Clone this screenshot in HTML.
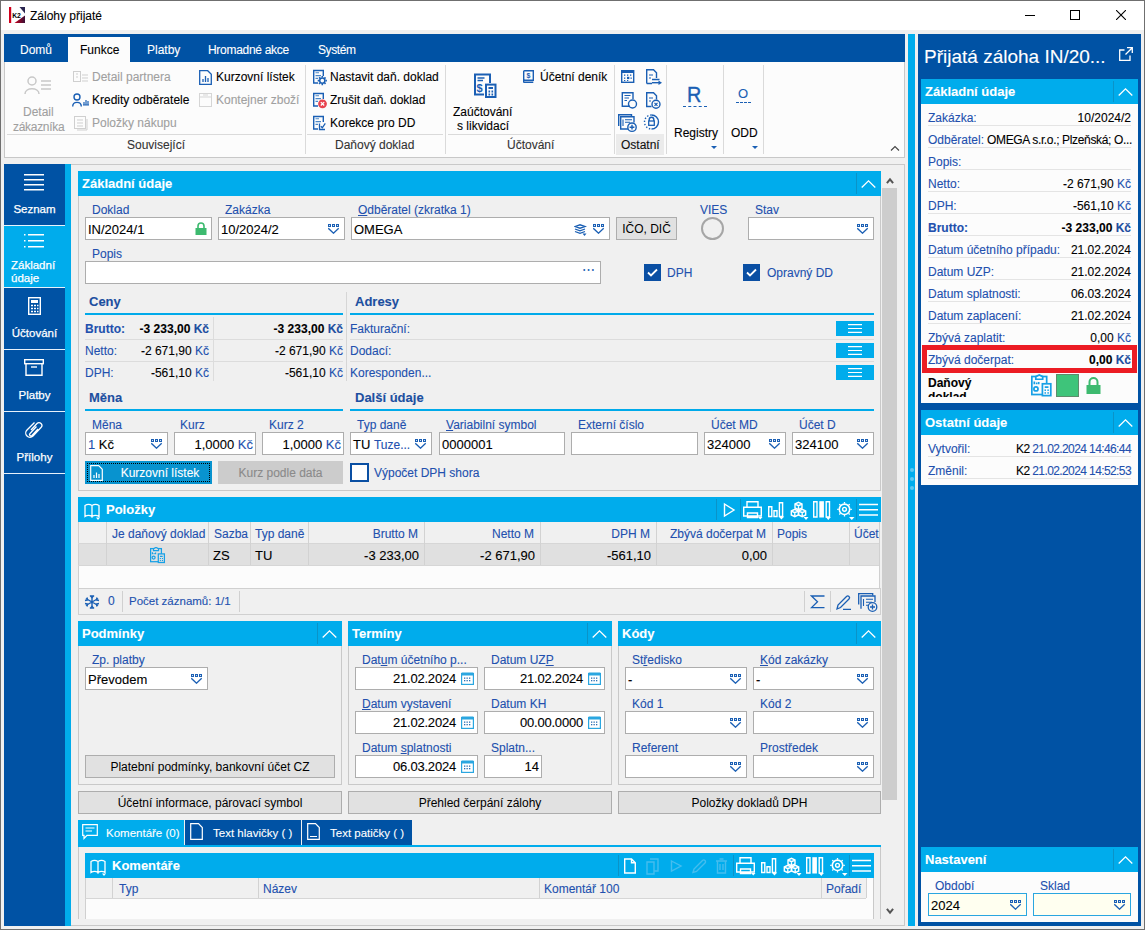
<!DOCTYPE html>
<html><head><meta charset="utf-8">
<style>
*{box-sizing:border-box;margin:0;padding:0}
html,body{width:1145px;height:930px;overflow:hidden}
body{position:relative;background:#f0f0f0;font-family:"Liberation Sans",sans-serif;font-size:12px;color:#000;-webkit-font-smoothing:antialiased}
.t{-webkit-text-stroke:0.1px currentColor}
.a{position:absolute}
.t{position:absolute;white-space:nowrap;line-height:14px}
.db{background:#0052a4}
.cy{background:#00acec}
.lbl{position:absolute;white-space:nowrap;line-height:14px;color:#2355a8}
.inp{position:absolute;background:#fff;border:1px solid #adadad;height:23px}
.inp .v{position:absolute;left:3px;top:4px;line-height:14px;white-space:nowrap}
.hdr{position:absolute;background:#00acec;height:25px;color:#fff;font-weight:bold;font-size:13px}
.hdr .ht{position:absolute;left:4px;top:5px;line-height:15px;white-space:nowrap}
.chev{position:absolute;top:0;width:25px;height:25px;border-left:1px solid #0493c9}
.panel{position:absolute;border:1px solid #d0d0d0;border-top:none;background:#f0f0f0}
.btn{position:absolute;background:#e1e1e1;border:1px solid #adadad;text-align:center;line-height:20px;white-space:nowrap}
.dd{position:absolute;width:13px;height:11px}
.sec{position:absolute;color:#1c4fa0;font-weight:bold;font-size:13px;line-height:15px;white-space:nowrap}
.secl{position:absolute;height:2px;background:#00a2e8}
.rib{color:#000}
.gr{color:#a0a0a0}
</style></head><body>

<!-- title bar -->
<div class="a" style="left:1px;top:1px;width:1143px;height:29px;background:#fff"></div>
<div class="t" style="left:30px;top:9px;font-size:12px">Zálohy přijaté</div>

<!-- ribbon tab bar -->
<div class="a db" style="left:4px;top:34px;width:901px;height:28px"></div>
<!-- ribbon content -->
<div class="a" style="left:4px;top:62px;width:901px;height:96px;background:#fcfcfc;border:1px solid #c8c8c8;border-top:none"></div>


<!-- title icon -->
<svg class="a" style="left:9px;top:7px" width="16" height="16" viewBox="0 0 16 16">
<defs><linearGradient id="k2g" x1="0" y1="0" x2="1" y2="0"><stop offset="0" stop-color="#c8001a"/><stop offset="1" stop-color="#3a1038"/></linearGradient></defs>
<rect x="0" y="0" width="2.2" height="16" fill="#d0001c"/>
<path d="M10.5 0 L16 0 L16 6.5 Z" fill="#2a2550"/>
<path d="M5.5 16 L16 8.5 L16 16 Z" fill="url(#k2g)"/>
<text x="3.2" y="10.8" font-family="Liberation Sans" font-weight="bold" font-size="6.8" fill="#000">K2</text>
</svg>
<!-- window controls -->
<div class="a" style="left:1025px;top:15px;width:10px;height:1px;background:#000"></div>
<div class="a" style="left:1070px;top:10px;width:10px;height:10px;border:1px solid #000"></div>
<svg class="a" style="left:1116px;top:10px" width="10" height="10" viewBox="0 0 10 10"><path d="M0 0L10 10M10 0L0 10" stroke="#000" stroke-width="1.1"/></svg>

<!-- ribbon tabs -->
<div class="a" style="left:68px;top:37px;width:62px;height:25px;background:#fcfcfc"></div>
<div class="t" style="left:20px;top:43px;color:#fff">Domů</div>
<div class="t" style="left:80px;top:43px;color:#000">Funkce</div>
<div class="t" style="left:147px;top:43px;color:#fff">Platby</div>
<div class="t" style="left:208px;top:43px;color:#fff;letter-spacing:-0.3px">Hromadné akce</div>
<div class="t" style="left:318px;top:43px;color:#fff;letter-spacing:-0.4px">Systém</div>

<!-- ribbon separators -->
<div class="a" style="left:305px;top:65px;width:1px;height:89px;background:#dadada"></div>
<div class="a" style="left:445px;top:65px;width:1px;height:89px;background:#dadada"></div>
<div class="a" style="left:614px;top:65px;width:1px;height:89px;background:#dadada"></div>
<div class="a" style="left:666px;top:65px;width:1px;height:89px;background:#dadada"></div>
<div class="a" style="left:723px;top:65px;width:1px;height:89px;background:#dadada"></div>
<div class="a" style="left:763px;top:65px;width:1px;height:89px;background:#dadada"></div>
<div class="a" style="left:7px;top:134px;width:295px;height:1px;background:#dadada"></div>
<div class="a" style="left:307px;top:134px;width:136px;height:1px;background:#dadada"></div>
<div class="a" style="left:448px;top:134px;width:163px;height:1px;background:#dadada"></div>
<div class="a" style="left:616px;top:134px;width:48px;height:21px;background:#ebebeb"></div>

<!-- group Související -->
<svg class="a" style="left:24px;top:76px" width="28" height="18" viewBox="0 0 28 18"><g fill="none" stroke="#c8c8c8" stroke-width="1.5"><circle cx="8" cy="5" r="4"/><path d="M1 18 C1 11 15 11 15 18"/><path d="M17 5H27M17 9H27M17 13H27"/></g></svg>
<div class="t gr" style="left:23px;top:105px">Detail</div>
<div class="t gr" style="left:13px;top:120px;letter-spacing:-0.3px">zákazníka</div>

<svg class="a" style="left:73px;top:70px" width="16" height="14" viewBox="0 0 16 14"><g fill="none" stroke="#cfcfcf" stroke-width="1"><rect x="0.5" y="1.5" width="7" height="10"/><path d="M3 4h2M3 7h2M9 5h6M9 8h6M9 11h6"/></g></svg>
<div class="t gr" style="left:92px;top:70px">Detail partnera</div>
<svg class="a" style="left:72px;top:93px" width="18" height="14" viewBox="0 0 18 14"><g fill="none" stroke="#1a5fb4" stroke-width="1.4"><circle cx="5" cy="4" r="3"/><path d="M0.7 13.5C0.7 8 9.3 8 9.3 13.5"/></g><path d="M11 12h6M12 12V9M14 12V7M16 12V8" stroke="#1a5fb4" stroke-width="1.2"/></svg>
<div class="t" style="left:92px;top:93px">Kredity odběratele</div>
<svg class="a" style="left:74px;top:116px" width="14" height="15" viewBox="0 0 14 15"><g fill="none" stroke="#cfcfcf" stroke-width="1"><rect x="0.5" y="0.5" width="11" height="12"/><path d="M3 4h6M3 7h6M3 10h6M13 3v11H3"/></g></svg>
<div class="t gr" style="left:92px;top:116px">Položky nákupu</div>

<svg class="a" style="left:199px;top:70px" width="13" height="15" viewBox="0 0 13 15"><g fill="none" stroke="#1a5fb4" stroke-width="1.3"><path d="M0.7 0.7h8l3.6 3.6v10H0.7z"/></g><path d="M4 12V9M6.5 12V6M9 12V8" stroke="#1a5fb4" stroke-width="1.3"/></svg>
<div class="t" style="left:216px;top:70px">Kurzovní lístek</div>
<svg class="a" style="left:199px;top:93px" width="13" height="14" viewBox="0 0 13 14"><g fill="none" stroke="#d5d5d5" stroke-width="1"><rect x="0.5" y="0.5" width="12" height="13"/><path d="M0.5 4h12M4 2h5"/></g></svg>
<div class="t gr" style="left:216px;top:93px">Kontejner zboží</div>
<div class="t" style="left:127px;top:138px;color:#333">Související</div>

<!-- group Daňový doklad -->
<svg class="a" style="left:305px;top:65px" width="30" height="70" viewBox="305 65 30 70"><path d="M318 83H313.7V70.5H323.3V76" fill="none" stroke="#1a5fb4" stroke-width="1.4"/><path d="M315.5 72.8H319M315.5 75.6H321M315.5 78.4H318" stroke="#4a86c8" stroke-width="1.1"/><circle cx="322.3" cy="80.6" r="2.6" fill="none" stroke="#1a5fb4" stroke-width="1.5"/><path d="M325.50 80.60L326.90 80.60M324.56 82.86L325.55 83.85M322.30 83.80L322.30 85.20M320.04 82.86L319.05 83.85M319.10 80.60L317.70 80.60M320.04 78.34L319.05 77.35M322.30 77.40L322.30 76.00M324.56 78.34L325.55 77.35" stroke="#1a5fb4" stroke-width="1.6"/><path d="M318 106H313.7V93.5H323.3V99" fill="none" stroke="#1a5fb4" stroke-width="1.4"/><path d="M315.5 95.8H319M315.5 98.6H321M315.5 101.4H318" stroke="#4a86c8" stroke-width="1.1"/><circle cx="322.5" cy="103.8" r="4.4" fill="#e8434f"/><path d="M320.8 102.1l3.4 3.4M324.2 102.1l-3.4 3.4" stroke="#fff" stroke-width="1.3"/><path d="M318 129H313.7V116.5H323.3V122" fill="none" stroke="#1a5fb4" stroke-width="1.4"/><path d="M315.5 118.8H319M315.5 121.6H321M315.5 124.4H318" stroke="#4a86c8" stroke-width="1.1"/><path d="M319.5 123.5V129.5H325" fill="none" stroke="#1a5fb4" stroke-width="1.3"/><path d="M320.8 126.3L322.3 127.8L325.3 123.3" fill="none" stroke="#1a5fb4" stroke-width="1.3"/></svg>
<div class="t" style="left:330px;top:70px">Nastavit daň. doklad</div>

<div class="t" style="left:330px;top:93px">Zrušit daň. doklad</div>

<div class="t" style="left:330px;top:116px">Korekce pro DD</div>
<div class="t" style="left:335px;top:138px;color:#333">Daňový doklad</div>

<!-- group Účtování -->
<svg class="a" style="left:473px;top:73px" width="24" height="25" viewBox="0 0 24 25"><g fill="none" stroke="#1a5fb4" stroke-width="2"><path d="M11 21.6H2V1.6H17V10"/><rect x="13" y="11.6" width="9.5" height="12.4"/></g><path d="M4.5 5H11.5M4.5 7.5H10" stroke="#1a5fb4" stroke-width="1.6"/><text x="3.6" y="18.5" font-family="Liberation Sans" font-weight="bold" font-size="11" fill="#1a5fb4">$</text><path d="M15.5 15H20M15.5 18.5h1.6M18.5 18.5h1.6M15.5 21.5h1.6M18.5 21.5h1.6" stroke="#1a5fb4" stroke-width="1.8"/></svg>
<div class="t" style="left:453px;top:105px">Zaúčtování</div>
<div class="t" style="left:457px;top:119px">s likvidací</div>
<svg class="a" style="left:523px;top:70px" width="11" height="13" viewBox="0 0 11 13"><g fill="none" stroke="#1a5fb4" stroke-width="1.4"><path d="M0.7 11V1.5A0.8 0.8 0 0 1 1.5 0.7H10.3V10.3H1.5A0.8 0.8 0 0 0 0.7 11A0.8 0.8 0 0 0 1.5 12.3H10.3"/></g><text x="3.6" y="7.8" font-family="Liberation Sans" font-weight="bold" font-size="7" fill="#1a5fb4">$</text></svg>
<div class="t" style="left:540px;top:70px">Účetní deník</div>
<div class="t" style="left:507px;top:138px;color:#333">Účtování</div>

<!-- group Ostatní -->
<svg class="a" style="left:614px;top:64px" width="54" height="70" viewBox="614 64 54 70"><g fill="none" stroke="#1a5fb4" stroke-width="1.4">
<rect x="621.7" y="70.7" width="12" height="11.6"/>
<path d="M646.7 83.5V69.7H653.5L656.5 72.7V78M652 83.5H646.7M652 79.5H656.5A2 2 0 0 1 656.5 79.5H659.5"/>
<path d="M649 75H653M649 78H651" stroke-width="1.2"/>
<path d="M630 106.3H622.3V92.7H633V99"/><circle cx="632.5" cy="104" r="4"/>
<path d="M624.5 95.5H630.5M624.5 98H629M624.5 100.5H627" stroke-width="1.1"/>
<path d="M651.5 106.5H646.7V92.7H653.5L656.5 95.7V99.5"/><circle cx="656" cy="104.3" r="4"/>
<path d="M654.5 102.8L657.5 105.8M657.5 102.8L654.5 105.8" stroke-width="1.2"/>
<path d="M649 98H653M649 101H651" stroke-width="1.2"/>
<path d="M618.7 126V114.7H631.5V116.5"/><path d="M628 129H620.7V116.7H634V122.5"/>
<path d="M623 119.5V126M625 119.7H632M625 122.3H630" stroke-width="1.1"/>
<path d="M651.5 115A7 7 0 0 1 651.5 129"/>
<path d="M651.5 115A7 7 0 0 0 651.5 129" stroke-dasharray="1.4 1.8"/>
<path d="M649.2 121V119.5A2.3 2.3 0 0 1 653.8 119.5V121"/>
</g>
<rect x="621.7" y="70.7" width="12" height="2.3" fill="#1a5fb4"/>
<g fill="#1a5fb4"><rect x="624" y="74.5" width="1.3" height="1.3"/><rect x="627" y="74.5" width="1.3" height="1.3"/><rect x="630" y="74.5" width="1.3" height="1.3"/><rect x="624" y="77.5" width="1.3" height="1.3"/><rect x="627" y="76.8" width="2.3" height="2.3"/><rect x="630.5" y="77.5" width="1.3" height="1.3"/><rect x="624" y="80" width="1.3" height="1"/><rect x="627" y="80" width="1.3" height="1"/></g>
<path d="M658.5 80.5L662 82.7L658.5 85Z" fill="#1a5fb4"/>
<path d="M652 82.7H659" stroke="#1a5fb4" stroke-width="1.4"/>
<circle cx="632" cy="127.2" r="4.2" fill="#fcfcfc" stroke="#1a5fb4" stroke-width="1.4"/><path d="M629.6 127.2H634.4M632 124.8V129.6" stroke="#1a5fb4" stroke-width="1.4"/>
<rect x="648.7" y="121" width="5.6" height="4.3" fill="none" stroke="#1a5fb4" stroke-width="1.3"/>
</svg>
<div class="t" style="left:621px;top:138px;color:#111">Ostatní</div>

<!-- Registry -->
<div class="t" style="left:687px;top:84px;font-size:22px;line-height:22px;color:#1a5fb4;transform:scaleX(0.9);transform-origin:0 0;-webkit-text-stroke:0.4px #1a5fb4">R</div>
<div class="a" style="left:683px;top:106px;width:24px;height:0;border-top:1.5px dashed #1a5fb4"></div>
<div class="t" style="left:674px;top:126px">Registry</div>
<div class="a" style="left:711px;top:146px;width:0;height:0;border-left:3.5px solid transparent;border-right:3.5px solid transparent;border-top:3px solid #1a5fb4"></div>

<!-- ODD -->
<div class="t" style="left:738px;top:87px;font-size:13px;line-height:14px;color:#1a5fb4">O</div>
<div class="a" style="left:736px;top:102px;width:15px;height:0;border-top:1.2px dashed #1a5fb4"></div>
<div class="t" style="left:731px;top:126px">ODD</div>
<div class="a" style="left:752px;top:146px;width:0;height:0;border-left:3.5px solid transparent;border-right:3.5px solid transparent;border-top:3px solid #1a5fb4"></div>

<svg class="a" style="left:890px;top:145px" width="10" height="6" viewBox="0 0 10 6"><path d="M1 5.5L5 1.5L9 5.5" fill="none" stroke="#444" stroke-width="1.1"/></svg>

<div class="a" style="left:4px;top:164px;width:61px;height:762px;background:#0052a4"></div>
<div class="a" style="left:65px;top:164px;width:6px;height:762px;background:#00acec"></div>
<div class="a" style="left:4px;top:226px;width:61px;height:61px;background:#00acec"></div>
<div class="a" style="left:4px;top:225px;width:61px;height:1px;background:#e8f2fb"></div>
<div class="a" style="left:4px;top:287px;width:61px;height:1px;background:#e8f2fb"></div>
<div class="a" style="left:4px;top:349px;width:61px;height:1px;background:#e8f2fb"></div>
<div class="a" style="left:4px;top:411px;width:61px;height:1px;background:#e8f2fb"></div>
<div class="a" style="left:4px;top:473px;width:61px;height:1px;background:#e8f2fb"></div>
<svg class="a" style="left:24px;top:174px" width="20" height="17" viewBox="0 0 20 17"><path d="M0 0.75H20M0 5.75H20M0 10.75H20M0 15.75H20" stroke="#fff" stroke-width="1.3"/></svg>
<div class="t" style="left:4px;top:202px;width:61px;text-align:center;color:#fff;font-size:11.5px;-webkit-text-stroke:0.25px #fff">Seznam</div>
<svg class="a" style="left:24px;top:234px" width="20" height="14" viewBox="0 0 20 14"><path d="M4 0.75H20M4 6.75H20M4 12.75H20" stroke="#fff" stroke-width="1.3"/><path d="M0 0.75H1.5M0 6.75H1.5M0 12.75H1.5" stroke="#fff" stroke-width="1.3"/></svg>
<div class="t" style="left:11px;top:258px;color:#fff;font-size:11.5px;-webkit-text-stroke:0.25px #fff">Základní</div>
<div class="t" style="left:11px;top:271px;color:#fff;font-size:11.5px;-webkit-text-stroke:0.25px #fff">údaje</div>
<svg class="a" style="left:28px;top:297px" width="13" height="18" viewBox="0 0 13 18"><rect x="0.7" y="0.7" width="11.6" height="16.6" fill="none" stroke="#fff" stroke-width="1.4"/><rect x="3" y="3" width="7" height="3" fill="#fff"/><path d="M3 8.5h2M6 8.5h2M9 8.5h1.5M3 11.5h2M6 11.5h2M9 11.5h1.5M3 14.5h2M6 14.5h2M9 14.5h1.5" stroke="#fff" stroke-width="1.5"/></svg>
<div class="t" style="left:4px;top:326px;width:61px;text-align:center;color:#fff;font-size:11.5px;-webkit-text-stroke:0.25px #fff">Účtování</div>
<svg class="a" style="left:24px;top:359px" width="20" height="17" viewBox="0 0 20 17"><rect x="0.7" y="0.7" width="18.6" height="4" fill="none" stroke="#fff" stroke-width="1.4"/><path d="M2 4.7V16.3H18V4.7" fill="none" stroke="#fff" stroke-width="1.4"/><path d="M7 8h6" stroke="#fff" stroke-width="1.4"/></svg>
<div class="t" style="left:4px;top:388px;width:61px;text-align:center;color:#fff;font-size:11.5px;-webkit-text-stroke:0.25px #fff">Platby</div>
<svg class="a" style="left:25px;top:420px" width="18" height="19" viewBox="0 0 18 19"><path d="M6 10L12 3.5a2.8 2.8 0 0 1 4 4L8 16a4.2 4.2 0 0 1-6-6L9.5 2.5M11.5 6.5L5 13.5a1.3 1.3 0 0 0 2 2L13 9" fill="none" stroke="#fff" stroke-width="1.3"/></svg>
<div class="t" style="left:4px;top:450px;width:61px;text-align:center;color:#fff;font-size:11.5px;-webkit-text-stroke:0.25px #fff">Přílohy</div>
<div class="a" style="left:71px;top:164px;width:834px;height:762px;background:#f0f0f0;border-top:1px solid #c9c9c9;border-right:1px solid #c9c9c9"></div>
<svg class="a" style="left:886px;top:177px" width="8" height="7" viewBox="0 0 8 7"><path d="M0.9 6.1L4 2.4L7.1 6.1" fill="none" stroke="#555" stroke-width="2"/></svg>
<div class="a" style="left:882px;top:188px;width:15px;height:612px;background:#cdcdcd"></div>
<svg class="a" style="left:886px;top:908px" width="8" height="7" viewBox="0 0 8 7"><path d="M0.9 0.9L4 4.6L7.1 0.9" fill="none" stroke="#555" stroke-width="2"/></svg>
<div class="a" style="left:78px;top:171px;width:803px;height:25px;background:#00acec"></div>
<div class="t" style="left:82px;top:176px;color:#fff;font-weight:bold;font-size:13px;line-height:15px">Základní údaje</div>
<div class="a" style="left:856px;top:173px;width:1px;height:21px;background:#0a93c8"></div>
<svg class="a" style="left:861px;top:180px" width="15" height="8" viewBox="0 0 15 8"><path d="M0.7 7.5L7.5 0.9L14.3 7.5" fill="none" stroke="#fff" stroke-width="1.3"/></svg>
<div class="a" style="left:78px;top:196px;width:803px;height:295px;border:1px solid #c9c9c9;border-top:none"></div>
<div class="t" style="left:92px;top:203px;color:#2250ae;">Doklad</div>
<div class="a" style="left:85px;top:217px;width:127px;height:23px;background:#fff;border:1px solid #adadad"></div>
<div class="t" style="left:88px;top:223px;color:#000;font-size:13px">IN/2024/1</div>
<svg class="a" style="left:195px;top:222px" width="12" height="13" viewBox="0 0 12 13"><path d="M3 6V4a3 3 0 0 1 6 0v2" fill="none" stroke="#3dba6f" stroke-width="1.6"/><rect x="0.5" y="6" width="11" height="7" fill="#3dba6f"/></svg>
<div class="t" style="left:225px;top:203px;color:#2250ae;">Zakázka</div>
<div class="a" style="left:218px;top:217px;width:127px;height:23px;background:#fff;border:1px solid #adadad"></div>
<div class="t" style="left:221px;top:223px;color:#000;font-size:13px">10/2024/2</div>
<svg class="a" style="left:328px;top:224px" width="12" height="10" viewBox="0 0 12 10"><g fill="#1a5fb4"><rect x="0" y="0" width="3" height="3"/><rect x="4" y="0" width="3" height="3"/><rect x="8" y="0" width="3" height="3"/></g><g fill="#cfe0f4"><rect x="1" y="1" width="1" height="1"/><rect x="5" y="1" width="1" height="1"/><rect x="9" y="1" width="1" height="1"/></g><path d="M0.3 4.3L5.5 9.2L10.7 4.3" fill="none" stroke="#1a5fb4" stroke-width="1.3"/></svg>
<div class="t" style="left:358px;top:203px;color:#2250ae;"><u>O</u>dběratel (zkratka 1)</div>
<div class="a" style="left:351px;top:217px;width:259px;height:23px;background:#fff;border:1px solid #adadad"></div>
<div class="t" style="left:354px;top:223px;color:#000;font-size:13px">OMEGA</div>
<svg class="a" style="left:593px;top:224px" width="12" height="10" viewBox="0 0 12 10"><g fill="#1a5fb4"><rect x="0" y="0" width="3" height="3"/><rect x="4" y="0" width="3" height="3"/><rect x="8" y="0" width="3" height="3"/></g><g fill="#cfe0f4"><rect x="1" y="1" width="1" height="1"/><rect x="5" y="1" width="1" height="1"/><rect x="9" y="1" width="1" height="1"/></g><path d="M0.3 4.3L5.5 9.2L10.7 4.3" fill="none" stroke="#1a5fb4" stroke-width="1.3"/></svg>
<svg class="a" style="left:574px;top:224px" width="13" height="12" viewBox="0 0 13 12"><g fill="none" stroke="#1a5fb4" stroke-width="1.3"><path d="M1 2.5L6 0.8L11 2.5L6 4.2Z"/><path d="M1 5L6 6.8L11 5M1 7.5L6 9.3L11 7.5"/></g><path d="M8.5 9.5h4l-2 2.5z" fill="#1a5fb4"/></svg>
<div class="a" style="left:616px;top:217px;width:61px;height:23px;background:#e1e1e1;border:1px solid #adadad;text-align:center;line-height:21px;padding-top:1px;white-space:nowrap;">IČO, DIČ</div>
<div class="t" style="left:700px;top:203px;color:#2250ae;">VIES</div>
<div class="a" style="left:701px;top:217px;width:23px;height:23px;border:2px solid #a6a6a6;border-radius:50%"></div>
<div class="t" style="left:755px;top:203px;color:#2250ae;">Stav</div>
<div class="a" style="left:748px;top:217px;width:126px;height:23px;background:#fff;border:1px solid #adadad"></div>
<svg class="a" style="left:857px;top:224px" width="12" height="10" viewBox="0 0 12 10"><g fill="#1a5fb4"><rect x="0" y="0" width="3" height="3"/><rect x="4" y="0" width="3" height="3"/><rect x="8" y="0" width="3" height="3"/></g><g fill="#cfe0f4"><rect x="1" y="1" width="1" height="1"/><rect x="5" y="1" width="1" height="1"/><rect x="9" y="1" width="1" height="1"/></g><path d="M0.3 4.3L5.5 9.2L10.7 4.3" fill="none" stroke="#1a5fb4" stroke-width="1.3"/></svg>
<div class="t" style="left:92px;top:247px;color:#2250ae;">Popis</div>
<div class="a" style="left:85px;top:261px;width:516px;height:23px;background:#fff;border:1px solid #adadad"></div>
<div class="t" style="left:582px;top:263px;color:#1a5fb4;font-size:13px">⋯</div>
<svg class="a" style="left:644px;top:264px" width="17" height="17" viewBox="0 0 17 17"><rect width="17" height="17" fill="#0a4fa3"/><path d="M4 8.5L7 11.5L13 5.5" fill="none" stroke="#fff" stroke-width="1.8"/></svg>
<div class="t" style="left:667px;top:266px;color:#2250ae;">DPH</div>
<svg class="a" style="left:743px;top:264px" width="17" height="17" viewBox="0 0 17 17"><rect width="17" height="17" fill="#0a4fa3"/><path d="M4 8.5L7 11.5L13 5.5" fill="none" stroke="#fff" stroke-width="1.8"/></svg>
<div class="t" style="left:767px;top:266px;color:#2250ae;">Opravný DD</div>
<div class="t" style="left:89px;top:294px;color:#1c4fa0;font-weight:bold;font-size:13px;line-height:15px">Ceny</div>
<div class="a" style="left:85px;top:313px;width:258px;height:2px;background:#00aaea"></div>
<div class="a" style="left:346px;top:292px;width:1px;height:89px;background:#d6d6d6"></div>
<div class="t" style="left:85px;top:322px;color:#2250ae;font-weight:bold;">Brutto:</div>
<div class="t" style="left:120px;top:322px;width:89px;text-align:right;font-weight:bold;">-3 233,00 <span style="color:#1c4fa0">Kč</span></div>
<div class="t" style="left:216px;top:322px;width:127px;text-align:right;font-weight:bold;">-3 233,00 <span style="color:#1c4fa0">Kč</span></div>
<div class="a" style="left:85px;top:339px;width:258px;height:1px;background:#dcdcdc"></div>
<div class="t" style="left:85px;top:344px;color:#2250ae;">Netto:</div>
<div class="t" style="left:120px;top:344px;width:89px;text-align:right;">-2 671,90 <span style="color:#2250ae">Kč</span></div>
<div class="t" style="left:216px;top:344px;width:127px;text-align:right;">-2 671,90 <span style="color:#2250ae">Kč</span></div>
<div class="a" style="left:85px;top:361px;width:258px;height:1px;background:#dcdcdc"></div>
<div class="t" style="left:85px;top:366px;color:#2250ae;">DPH:</div>
<div class="t" style="left:120px;top:366px;width:89px;text-align:right;">-561,10 <span style="color:#2250ae">Kč</span></div>
<div class="t" style="left:216px;top:366px;width:127px;text-align:right;">-561,10 <span style="color:#2250ae">Kč</span></div>
<div class="a" style="left:213px;top:317px;width:1px;height:64px;background:#dcdcdc"></div>
<div class="t" style="left:355px;top:294px;color:#1c4fa0;font-weight:bold;font-size:13px;line-height:15px">Adresy</div>
<div class="a" style="left:350px;top:313px;width:524px;height:2px;background:#00aaea"></div>
<div class="t" style="left:350px;top:322px;color:#2250ae">Fakturační:</div>
<div class="a" style="left:836px;top:321px;width:38px;height:15px;background:#00acec"></div>
<svg class="a" style="left:848px;top:324px" width="14" height="9" viewBox="0 0 14 9"><path d="M0 0.6H14M0 4.5H14M0 8.4H14" stroke="#fff" stroke-width="1.1"/></svg>
<div class="a" style="left:350px;top:339px;width:524px;height:1px;background:#dcdcdc"></div>
<div class="t" style="left:350px;top:344px;color:#2250ae">Dodací:</div>
<div class="a" style="left:836px;top:343px;width:38px;height:15px;background:#00acec"></div>
<svg class="a" style="left:848px;top:346px" width="14" height="9" viewBox="0 0 14 9"><path d="M0 0.6H14M0 4.5H14M0 8.4H14" stroke="#fff" stroke-width="1.1"/></svg>
<div class="a" style="left:350px;top:361px;width:524px;height:1px;background:#dcdcdc"></div>
<div class="t" style="left:350px;top:366px;color:#2250ae">Koresponden...</div>
<div class="a" style="left:836px;top:365px;width:38px;height:15px;background:#00acec"></div>
<svg class="a" style="left:848px;top:368px" width="14" height="9" viewBox="0 0 14 9"><path d="M0 0.6H14M0 4.5H14M0 8.4H14" stroke="#fff" stroke-width="1.1"/></svg>
<div class="t" style="left:89px;top:390px;color:#1c4fa0;font-weight:bold;font-size:13px;line-height:15px">Měna</div>
<div class="a" style="left:85px;top:409px;width:258px;height:2px;background:#00aaea"></div>
<div class="t" style="left:92px;top:418px;color:#2250ae;">Měna</div>
<div class="t" style="left:180px;top:418px;color:#2250ae;">Kurz</div>
<div class="t" style="left:269px;top:418px;color:#2250ae;">Kurz 2</div>
<div class="a" style="left:85px;top:432px;width:83px;height:23px;background:#fff;border:1px solid #adadad"></div>
<div class="t" style="left:88px;top:438px;color:#000;font-size:13px"><span style="color:#2250ae">1</span> Kč</div>
<svg class="a" style="left:151px;top:439px" width="12" height="10" viewBox="0 0 12 10"><g fill="#1a5fb4"><rect x="0" y="0" width="3" height="3"/><rect x="4" y="0" width="3" height="3"/><rect x="8" y="0" width="3" height="3"/></g><g fill="#cfe0f4"><rect x="1" y="1" width="1" height="1"/><rect x="5" y="1" width="1" height="1"/><rect x="9" y="1" width="1" height="1"/></g><path d="M0.3 4.3L5.5 9.2L10.7 4.3" fill="none" stroke="#1a5fb4" stroke-width="1.3"/></svg>
<div class="a" style="left:174px;top:432px;width:82px;height:23px;background:#fff;border:1px solid #adadad"></div>
<div class="t" style="left:174px;top:438px;width:79px;text-align:right;color:#000;font-size:13px">1,0000 <span style="color:#2250ae">Kč</span></div>
<div class="a" style="left:262px;top:432px;width:82px;height:23px;background:#fff;border:1px solid #adadad"></div>
<div class="t" style="left:262px;top:438px;width:79px;text-align:right;color:#000;font-size:13px">1,0000 <span style="color:#2250ae">Kč</span></div>
<div class="a" style="left:85px;top:461px;width:127px;height:23px;background:#0893cf"></div>
<div class="a" style="left:87px;top:463px;width:123px;height:19px;border:1px dotted #000"></div>
<svg class="a" style="left:90px;top:465px" width="13" height="16" viewBox="0 0 13 16"><path d="M0.7 0.7h8l3.6 3.6v11H0.7z" fill="none" stroke="#fff" stroke-width="1.2"/><path d="M4 13V10M6.5 13V7.5M9 13V9" stroke="#fff" stroke-width="1.2"/></svg>
<div class="t" style="left:106px;top:466px;width:108px;text-align:center;color:#fff">Kurzovní lístek</div>
<div class="a" style="left:218px;top:461px;width:125px;height:23px;background:#cccccc"></div>
<div class="t" style="left:218px;top:466px;width:125px;text-align:center;color:#8a8a8a">Kurz podle data</div>
<div class="t" style="left:355px;top:390px;color:#1c4fa0;font-weight:bold;font-size:13px;line-height:15px">Další údaje</div>
<div class="a" style="left:350px;top:409px;width:524px;height:2px;background:#00aaea"></div>
<div class="t" style="left:357px;top:418px;color:#2250ae;">Typ daně</div>
<div class="t" style="left:446px;top:418px;color:#2250ae;"><u>V</u>ariabilní symbol</div>
<div class="t" style="left:578px;top:418px;color:#2250ae;">Externí číslo</div>
<div class="t" style="left:711px;top:418px;color:#2250ae;">Účet MD</div>
<div class="t" style="left:799px;top:418px;color:#2250ae;">Účet D</div>
<div class="a" style="left:350px;top:432px;width:82px;height:23px;background:#fff;border:1px solid #adadad"></div>
<div class="t" style="left:353px;top:438px;color:#000;font-size:13px">TU <span style="color:#2250ae;font-size:12px">Tuze...</span></div>
<svg class="a" style="left:415px;top:439px" width="12" height="10" viewBox="0 0 12 10"><g fill="#1a5fb4"><rect x="0" y="0" width="3" height="3"/><rect x="4" y="0" width="3" height="3"/><rect x="8" y="0" width="3" height="3"/></g><g fill="#cfe0f4"><rect x="1" y="1" width="1" height="1"/><rect x="5" y="1" width="1" height="1"/><rect x="9" y="1" width="1" height="1"/></g><path d="M0.3 4.3L5.5 9.2L10.7 4.3" fill="none" stroke="#1a5fb4" stroke-width="1.3"/></svg>
<div class="a" style="left:439px;top:432px;width:126px;height:23px;background:#fff;border:1px solid #adadad"></div>
<div class="t" style="left:442px;top:438px;color:#000;font-size:13px">0000001</div>
<div class="a" style="left:571px;top:432px;width:127px;height:23px;background:#fff;border:1px solid #adadad"></div>
<div class="a" style="left:704px;top:432px;width:82px;height:23px;background:#fff;border:1px solid #adadad"></div>
<div class="t" style="left:707px;top:438px;color:#000;font-size:13px">324000</div>
<svg class="a" style="left:769px;top:439px" width="12" height="10" viewBox="0 0 12 10"><g fill="#1a5fb4"><rect x="0" y="0" width="3" height="3"/><rect x="4" y="0" width="3" height="3"/><rect x="8" y="0" width="3" height="3"/></g><g fill="#cfe0f4"><rect x="1" y="1" width="1" height="1"/><rect x="5" y="1" width="1" height="1"/><rect x="9" y="1" width="1" height="1"/></g><path d="M0.3 4.3L5.5 9.2L10.7 4.3" fill="none" stroke="#1a5fb4" stroke-width="1.3"/></svg>
<div class="a" style="left:792px;top:432px;width:82px;height:23px;background:#fff;border:1px solid #adadad"></div>
<div class="t" style="left:795px;top:438px;color:#000;font-size:13px">324100</div>
<svg class="a" style="left:857px;top:439px" width="12" height="10" viewBox="0 0 12 10"><g fill="#1a5fb4"><rect x="0" y="0" width="3" height="3"/><rect x="4" y="0" width="3" height="3"/><rect x="8" y="0" width="3" height="3"/></g><g fill="#cfe0f4"><rect x="1" y="1" width="1" height="1"/><rect x="5" y="1" width="1" height="1"/><rect x="9" y="1" width="1" height="1"/></g><path d="M0.3 4.3L5.5 9.2L10.7 4.3" fill="none" stroke="#1a5fb4" stroke-width="1.3"/></svg>
<div class="a" style="left:350px;top:463px;width:19px;height:19px;border:2px solid #0a4fa3;background:#fff"></div>
<div class="t" style="left:374px;top:466px;color:#2250ae;">Výpočet DPH shora</div>
<div class="a" style="left:78px;top:497px;width:803px;height:25px;background:#00acec"></div>
<svg class="a" style="left:84px;top:503px" width="17" height="17" viewBox="0 0 17 17"><path d="M1 2.5C3 1.3 6 1.3 8 2.5V13.5C6 12.3 3 12.3 1 13.5Z M8 2.5C10 1.3 13 1.3 15 2.5V13.5C13 12.3 10 12.3 8 13.5Z" fill="none" stroke="#fff" stroke-width="1.3"/><path d="M12 14.5h4l-2 2.5z" fill="#fff"/></svg>
<div class="t" style="left:106px;top:502px;color:#fff;font-weight:bold;font-size:13px;line-height:15px">Položky</div>
<div class="a" style="left:716px;top:499px;width:1px;height:21px;background:#0a93c8"></div>
<div class="a" style="left:740px;top:499px;width:1px;height:21px;background:#0a93c8"></div>
<div class="a" style="left:856px;top:499px;width:1px;height:21px;background:#0a93c8"></div>
<svg class="a" style="left:720px;top:499px" width="160" height="22" viewBox="720 499 160 22"><g fill="none" stroke="#fff" stroke-width="1.4"><path d="M747 506.5V501.7H758V506.5M743.7 507.2H761.3V516H743.7ZM747.5 513H757.5V517.5H747.5Z"/><path d="M768.7 506.7H771.8V516.5H768.7ZM774 510.7H777V516.5H774ZM779.4 502.7H782.6V516.5H779.4Z"/><path d="M795 504L798.5 502.3L802 504V508L798.5 509.7L795 508ZM795 504L798.5 505.7L802 504M798.5 505.7V509.7"/><path d="M791.3 511L794.8 509.3L798.3 511V515L794.8 516.7L791.3 515ZM791.3 511L794.8 512.7L798.3 511M794.8 512.7V516.7"/><path d="M798.7 511L802.2 509.3L805.7 511V515L802.2 516.7L798.7 515ZM798.7 511L802.2 512.7L805.7 511M802.2 512.7V516.7"/><path d="M813.7 501.7H817V517H813.7ZM826.2 501.7H829.5V517H826.2Z"/><circle cx="844.5" cy="509.3" r="5.2" stroke-width="1.6"/><circle cx="844.5" cy="509.3" r="1.9" stroke-width="1.4"/><path d="M844.5 502V503.5M844.5 515V516.5M837.2 509.3H838.7M850.3 509.3H851.8M839.3 504.1L840.4 505.2M848.6 513.4L849.7 514.5M849.7 504.1L848.6 505.2M840.4 513.4L839.3 514.5" stroke-width="1.3"/><path d="M859 504.5H878M859 509.7H878M859 514.9H878" stroke-width="1.5"/></g><g fill="#fff"><path d="M724.5 504L734 510L724.5 516Z" fill="none" stroke="#fff" stroke-width="1.4"/><rect x="819.3" y="501.2" width="4.6" height="16.3"/><path d="M758 517h4.5l-2.25 2.5z"/><path d="M778.7 516.5h5.5l-2.75 3z"/><path d="M803.5 517h5l-2.5 3z"/><path d="M825.8 517h5l-2.5 3z"/><path d="M849 517h5.5l-2.75 3z"/></g></svg>
<div class="a" style="left:78px;top:522px;width:801px;height:21px;background:#f0f0f0;border-left:1px solid #d4d4d4"></div>
<div class="a" style="left:78px;top:544px;width:801px;height:21px;background:#e0e0e0"></div>
<div class="a" style="left:78px;top:565px;width:801px;height:23px;background:#fcfcfc"></div>
<div class="a" style="left:78px;top:522px;width:1px;height:66px;background:#d0d0d0"></div>
<div class="a" style="left:879px;top:522px;width:1px;height:66px;background:#d0d0d0"></div>
<div class="a" style="left:78px;top:543px;width:801px;height:1px;background:#d6d6d6"></div>
<div class="a" style="left:78px;top:565px;width:801px;height:1px;background:#d6d6d6"></div>
<div class="a" style="left:106px;top:522px;width:1px;height:43px;background:#d2d2d2"></div>
<div class="a" style="left:208px;top:522px;width:1px;height:43px;background:#d2d2d2"></div>
<div class="a" style="left:250px;top:522px;width:1px;height:43px;background:#d2d2d2"></div>
<div class="a" style="left:308px;top:522px;width:1px;height:43px;background:#d2d2d2"></div>
<div class="a" style="left:424px;top:522px;width:1px;height:43px;background:#d2d2d2"></div>
<div class="a" style="left:540px;top:522px;width:1px;height:43px;background:#d2d2d2"></div>
<div class="a" style="left:656px;top:522px;width:1px;height:43px;background:#d2d2d2"></div>
<div class="a" style="left:772px;top:522px;width:1px;height:43px;background:#d2d2d2"></div>
<div class="a" style="left:849px;top:522px;width:1px;height:43px;background:#d2d2d2"></div>
<div class="t" style="left:112px;top:527px;color:#2250ae">Je daňový doklad</div>
<div class="a" style="left:214px;top:522px;width:36px;height:21px;overflow:hidden"><div class="t" style="left:0;top:5px;color:#2250ae">Sazba DPH</div></div>
<div class="t" style="left:255px;top:527px;color:#2250ae">Typ daně</div>
<div class="t" style="left:308px;top:527px;width:110px;text-align:right;color:#2250ae">Brutto M</div>
<div class="t" style="left:424px;top:527px;width:110px;text-align:right;color:#2250ae">Netto M</div>
<div class="t" style="left:540px;top:527px;width:110px;text-align:right;color:#2250ae">DPH M</div>
<div class="t" style="left:656px;top:527px;width:110px;text-align:right;color:#2250ae">Zbývá dočerpat M</div>
<div class="t" style="left:777px;top:527px;color:#2250ae">Popis</div>
<div class="a" style="left:850px;top:522px;width:29px;height:21px;overflow:hidden"><div class="t" style="left:4px;top:5px;color:#2250ae">Účet MD</div></div>
<svg class="a" style="left:150px;top:547px" width="16" height="17" viewBox="0 0 16 17"><g fill="none" stroke="#17a0e6" stroke-width="1.25"><rect x="0.6" y="1.6" width="10.8" height="13.1"/><path d="M3.5 3.6H8.5V1.7L6 0.5L3.5 1.7Z" fill="#e0e0e0"/><rect x="8.3" y="6.9" width="6.1" height="8.6" fill="#e0e0e0"/><circle cx="3.6" cy="10.6" r="1.5"/></g><path d="M10 9.3H12.7M2.4 7.2V5.2M4.1 7.2V6M5.6 7.2V5.5" stroke="#17a0e6" stroke-width="1.2"/><g fill="#17a0e6"><rect x="9.8" y="11" width="1.1" height="1.1"/><rect x="11.9" y="11" width="1.1" height="1.1"/><rect x="9.8" y="13" width="1.1" height="1.1"/><rect x="11.9" y="13" width="1.1" height="1.1"/></g></svg>
<div class="t" style="left:213px;top:549px;font-size:13px">ZS</div>
<div class="t" style="left:255px;top:549px;font-size:13px">TU</div>
<div class="t" style="left:308px;top:549px;width:111px;text-align:right;font-size:13px">-3 233,00</div>
<div class="t" style="left:424px;top:549px;width:111px;text-align:right;font-size:13px">-2 671,90</div>
<div class="t" style="left:540px;top:549px;width:111px;text-align:right;font-size:13px">-561,10</div>
<div class="t" style="left:656px;top:549px;width:111px;text-align:right;font-size:13px">0,00</div>
<div class="a" style="left:78px;top:588px;width:803px;height:27px;background:#f0f0f0;border:1px solid #d0d0d0"></div>
<svg class="a" style="left:84px;top:594px" width="16" height="16" viewBox="0 0 16 16"><g fill="none" stroke="#1a5fb4" stroke-width="1.4"><path d="M8 1V15M1.9 4.5L14.1 11.5M1.9 11.5L14.1 4.5"/><path d="M6 1.5L8 3.5L10 1.5M6 14.5L8 12.5L10 14.5M1 6.5L3.5 6L3 3.5M15 9.5L12.5 10L13 12.5M1 9.5L3.5 10L3 12.5M15 6.5L12.5 6L13 3.5"/></g></svg>
<div class="t" style="left:108px;top:594px;color:#2250ae">0</div>
<div class="a" style="left:122px;top:591px;width:1px;height:21px;background:#d0d0d0"></div>
<div class="t" style="left:129px;top:594px;color:#2250ae;font-size:11.5px">Počet záznamů: 1/1</div>
<div class="a" style="left:239px;top:591px;width:1px;height:21px;background:#d0d0d0"></div>
<div class="a" style="left:804px;top:591px;width:1px;height:21px;background:#d0d0d0"></div>
<div class="a" style="left:830px;top:591px;width:1px;height:21px;background:#d0d0d0"></div>
<svg class="a" style="left:810px;top:590px" width="70" height="23" viewBox="810 590 70 23"><g fill="none" stroke="#1a5fb4" stroke-width="1.3"><path d="M824.5 596H811.5L817.5 601.8L811.5 607.6H824.5"/><path d="M837 609L838 605L846.5 596.5A1.5 1.5 0 0 1 849 599L840.5 607.5ZM843 609.3H851"/><path d="M858.7 604.5V593.7H872.7V595.5"/><path d="M861 608.7V596H875V602"/><path d="M863.5 599V606M866 599.3H873M866 602.3H872M866 605.3H869" stroke-width="1.1"/></g><circle cx="872.5" cy="607" r="4.3" fill="#f0f0f0" stroke="#1a5fb4" stroke-width="1.3"/><path d="M870 607h5M872.5 604.5v5" stroke="#1a5fb4" stroke-width="1.3"/></svg>
<div class="a" style="left:78px;top:621px;width:264px;height:25px;background:#00acec"></div>
<div class="t" style="left:82px;top:626px;color:#fff;font-weight:bold;font-size:13px;line-height:15px">Podmínky</div>
<div class="a" style="left:317px;top:623px;width:1px;height:21px;background:#0a93c8"></div>
<svg class="a" style="left:322px;top:630px" width="15" height="8" viewBox="0 0 15 8"><path d="M0.7 7.5L7.5 0.9L14.3 7.5" fill="none" stroke="#fff" stroke-width="1.3"/></svg>
<div class="a" style="left:78px;top:646px;width:264px;height:139px;border:1px solid #c9c9c9;border-top:none"></div>
<div class="t" style="left:92px;top:653px;color:#2250ae;">Zp. platby</div>
<div class="a" style="left:85px;top:667px;width:123px;height:23px;background:#fff;border:1px solid #adadad"></div>
<div class="t" style="left:88px;top:673px;color:#000;font-size:13px">Převodem</div>
<svg class="a" style="left:191px;top:674px" width="12" height="10" viewBox="0 0 12 10"><g fill="#1a5fb4"><rect x="0" y="0" width="3" height="3"/><rect x="4" y="0" width="3" height="3"/><rect x="8" y="0" width="3" height="3"/></g><g fill="#cfe0f4"><rect x="1" y="1" width="1" height="1"/><rect x="5" y="1" width="1" height="1"/><rect x="9" y="1" width="1" height="1"/></g><path d="M0.3 4.3L5.5 9.2L10.7 4.3" fill="none" stroke="#1a5fb4" stroke-width="1.3"/></svg>
<div class="a" style="left:85px;top:755px;width:250px;height:23px;background:#e1e1e1;border:1px solid #adadad;text-align:center;line-height:21px;padding-top:1px;white-space:nowrap;">Platební podmínky, bankovní účet CZ</div>
<div class="a" style="left:348px;top:621px;width:264px;height:25px;background:#00acec"></div>
<div class="t" style="left:352px;top:626px;color:#fff;font-weight:bold;font-size:13px;line-height:15px">Termíny</div>
<div class="a" style="left:587px;top:623px;width:1px;height:21px;background:#0a93c8"></div>
<svg class="a" style="left:592px;top:630px" width="15" height="8" viewBox="0 0 15 8"><path d="M0.7 7.5L7.5 0.9L14.3 7.5" fill="none" stroke="#fff" stroke-width="1.3"/></svg>
<div class="a" style="left:348px;top:646px;width:264px;height:139px;border:1px solid #c9c9c9;border-top:none"></div>
<div class="t" style="left:362px;top:653px;color:#2250ae;">Dat<u>u</u>m účetního p...</div>
<div class="t" style="left:491px;top:653px;color:#2250ae;">Datum UZ<u>P</u></div>
<div class="a" style="left:355px;top:667px;width:123px;height:23px;background:#fff;border:1px solid #adadad"></div>
<div class="t" style="left:355px;top:672px;width:101px;text-align:right;font-size:13px;letter-spacing:-0.2px">21.02.2024</div>
<svg class="a" style="left:461px;top:672px" width="13" height="13" viewBox="0 0 13 13"><rect x="0.6" y="1.6" width="11.8" height="10.8" fill="none" stroke="#2aa6e0" stroke-width="1.2"/><rect x="0.6" y="0.5" width="11.8" height="3" fill="#2aa6e0"/><g fill="#2a6fb4"><rect x="3" y="5.5" width="1.3" height="1.3"/><rect x="5.5" y="5.5" width="1.3" height="1.3"/><rect x="8" y="5.5" width="1.3" height="1.3"/><rect x="3" y="8" width="1.3" height="1.3"/><rect x="5.5" y="8" width="1.3" height="1.3"/><rect x="8" y="8" width="1.3" height="1.3"/></g></svg>
<div class="a" style="left:484px;top:667px;width:121px;height:23px;background:#fff;border:1px solid #adadad"></div>
<div class="t" style="left:484px;top:672px;width:99px;text-align:right;font-size:13px;letter-spacing:-0.2px">21.02.2024</div>
<svg class="a" style="left:588px;top:672px" width="13" height="13" viewBox="0 0 13 13"><rect x="0.6" y="1.6" width="11.8" height="10.8" fill="none" stroke="#2aa6e0" stroke-width="1.2"/><rect x="0.6" y="0.5" width="11.8" height="3" fill="#2aa6e0"/><g fill="#2a6fb4"><rect x="3" y="5.5" width="1.3" height="1.3"/><rect x="5.5" y="5.5" width="1.3" height="1.3"/><rect x="8" y="5.5" width="1.3" height="1.3"/><rect x="3" y="8" width="1.3" height="1.3"/><rect x="5.5" y="8" width="1.3" height="1.3"/><rect x="8" y="8" width="1.3" height="1.3"/></g></svg>
<div class="t" style="left:362px;top:697px;color:#2250ae;"><u>D</u>atum vystavení</div>
<div class="t" style="left:491px;top:697px;color:#2250ae;">Datum KH</div>
<div class="a" style="left:355px;top:711px;width:123px;height:23px;background:#fff;border:1px solid #adadad"></div>
<div class="t" style="left:355px;top:716px;width:101px;text-align:right;font-size:13px;letter-spacing:-0.2px">21.02.2024</div>
<svg class="a" style="left:461px;top:716px" width="13" height="13" viewBox="0 0 13 13"><rect x="0.6" y="1.6" width="11.8" height="10.8" fill="none" stroke="#2aa6e0" stroke-width="1.2"/><rect x="0.6" y="0.5" width="11.8" height="3" fill="#2aa6e0"/><g fill="#2a6fb4"><rect x="3" y="5.5" width="1.3" height="1.3"/><rect x="5.5" y="5.5" width="1.3" height="1.3"/><rect x="8" y="5.5" width="1.3" height="1.3"/><rect x="3" y="8" width="1.3" height="1.3"/><rect x="5.5" y="8" width="1.3" height="1.3"/><rect x="8" y="8" width="1.3" height="1.3"/></g></svg>
<div class="a" style="left:484px;top:711px;width:121px;height:23px;background:#fff;border:1px solid #adadad"></div>
<div class="t" style="left:484px;top:716px;width:99px;text-align:right;font-size:13px;letter-spacing:-0.2px">00.00.0000</div>
<svg class="a" style="left:588px;top:716px" width="13" height="13" viewBox="0 0 13 13"><rect x="0.6" y="1.6" width="11.8" height="10.8" fill="none" stroke="#2aa6e0" stroke-width="1.2"/><rect x="0.6" y="0.5" width="11.8" height="3" fill="#2aa6e0"/><g fill="#2a6fb4"><rect x="3" y="5.5" width="1.3" height="1.3"/><rect x="5.5" y="5.5" width="1.3" height="1.3"/><rect x="8" y="5.5" width="1.3" height="1.3"/><rect x="3" y="8" width="1.3" height="1.3"/><rect x="5.5" y="8" width="1.3" height="1.3"/><rect x="8" y="8" width="1.3" height="1.3"/></g></svg>
<div class="t" style="left:362px;top:741px;color:#2250ae;">Datum <u>s</u>platnosti</div>
<div class="t" style="left:491px;top:741px;color:#2250ae;">Splatn...</div>
<div class="a" style="left:355px;top:755px;width:123px;height:23px;background:#fff;border:1px solid #adadad"></div>
<div class="t" style="left:355px;top:760px;width:101px;text-align:right;font-size:13px;letter-spacing:-0.2px">06.03.2024</div>
<svg class="a" style="left:461px;top:760px" width="13" height="13" viewBox="0 0 13 13"><rect x="0.6" y="1.6" width="11.8" height="10.8" fill="none" stroke="#2aa6e0" stroke-width="1.2"/><rect x="0.6" y="0.5" width="11.8" height="3" fill="#2aa6e0"/><g fill="#2a6fb4"><rect x="3" y="5.5" width="1.3" height="1.3"/><rect x="5.5" y="5.5" width="1.3" height="1.3"/><rect x="8" y="5.5" width="1.3" height="1.3"/><rect x="3" y="8" width="1.3" height="1.3"/><rect x="5.5" y="8" width="1.3" height="1.3"/><rect x="8" y="8" width="1.3" height="1.3"/></g></svg>
<div class="a" style="left:484px;top:755px;width:58px;height:23px;background:#fff;border:1px solid #adadad"></div>
<div class="t" style="left:484px;top:760px;width:55px;text-align:right;font-size:13px">14</div>
<div class="a" style="left:618px;top:621px;width:263px;height:25px;background:#00acec"></div>
<div class="t" style="left:622px;top:626px;color:#fff;font-weight:bold;font-size:13px;line-height:15px">Kódy</div>
<div class="a" style="left:856px;top:623px;width:1px;height:21px;background:#0a93c8"></div>
<svg class="a" style="left:861px;top:630px" width="15" height="8" viewBox="0 0 15 8"><path d="M0.7 7.5L7.5 0.9L14.3 7.5" fill="none" stroke="#fff" stroke-width="1.3"/></svg>
<div class="a" style="left:618px;top:646px;width:263px;height:139px;border:1px solid #c9c9c9;border-top:none"></div>
<div class="t" style="left:632px;top:653px;color:#2250ae;">St<u>ř</u>edisko</div>
<div class="t" style="left:760px;top:653px;color:#2250ae;"><u>K</u>ód zakázky</div>
<div class="a" style="left:625px;top:667px;width:122px;height:23px;background:#fff;border:1px solid #adadad"></div>
<div class="t" style="left:628px;top:673px;color:#000;font-size:13px">-</div>
<svg class="a" style="left:730px;top:674px" width="12" height="10" viewBox="0 0 12 10"><g fill="#1a5fb4"><rect x="0" y="0" width="3" height="3"/><rect x="4" y="0" width="3" height="3"/><rect x="8" y="0" width="3" height="3"/></g><g fill="#cfe0f4"><rect x="1" y="1" width="1" height="1"/><rect x="5" y="1" width="1" height="1"/><rect x="9" y="1" width="1" height="1"/></g><path d="M0.3 4.3L5.5 9.2L10.7 4.3" fill="none" stroke="#1a5fb4" stroke-width="1.3"/></svg>
<div class="a" style="left:753px;top:667px;width:121px;height:23px;background:#fff;border:1px solid #adadad"></div>
<div class="t" style="left:756px;top:673px;color:#000;font-size:13px">-</div>
<svg class="a" style="left:857px;top:674px" width="12" height="10" viewBox="0 0 12 10"><g fill="#1a5fb4"><rect x="0" y="0" width="3" height="3"/><rect x="4" y="0" width="3" height="3"/><rect x="8" y="0" width="3" height="3"/></g><g fill="#cfe0f4"><rect x="1" y="1" width="1" height="1"/><rect x="5" y="1" width="1" height="1"/><rect x="9" y="1" width="1" height="1"/></g><path d="M0.3 4.3L5.5 9.2L10.7 4.3" fill="none" stroke="#1a5fb4" stroke-width="1.3"/></svg>
<div class="t" style="left:632px;top:697px;color:#2250ae;">Kód 1</div>
<div class="t" style="left:760px;top:697px;color:#2250ae;">Kód 2</div>
<div class="a" style="left:625px;top:711px;width:122px;height:23px;background:#fff;border:1px solid #adadad"></div>
<svg class="a" style="left:730px;top:718px" width="12" height="10" viewBox="0 0 12 10"><g fill="#1a5fb4"><rect x="0" y="0" width="3" height="3"/><rect x="4" y="0" width="3" height="3"/><rect x="8" y="0" width="3" height="3"/></g><g fill="#cfe0f4"><rect x="1" y="1" width="1" height="1"/><rect x="5" y="1" width="1" height="1"/><rect x="9" y="1" width="1" height="1"/></g><path d="M0.3 4.3L5.5 9.2L10.7 4.3" fill="none" stroke="#1a5fb4" stroke-width="1.3"/></svg>
<div class="a" style="left:753px;top:711px;width:121px;height:23px;background:#fff;border:1px solid #adadad"></div>
<svg class="a" style="left:857px;top:718px" width="12" height="10" viewBox="0 0 12 10"><g fill="#1a5fb4"><rect x="0" y="0" width="3" height="3"/><rect x="4" y="0" width="3" height="3"/><rect x="8" y="0" width="3" height="3"/></g><g fill="#cfe0f4"><rect x="1" y="1" width="1" height="1"/><rect x="5" y="1" width="1" height="1"/><rect x="9" y="1" width="1" height="1"/></g><path d="M0.3 4.3L5.5 9.2L10.7 4.3" fill="none" stroke="#1a5fb4" stroke-width="1.3"/></svg>
<div class="t" style="left:632px;top:741px;color:#2250ae;">Referent</div>
<div class="t" style="left:760px;top:741px;color:#2250ae;">Prostředek</div>
<div class="a" style="left:625px;top:755px;width:122px;height:23px;background:#fff;border:1px solid #adadad"></div>
<svg class="a" style="left:730px;top:762px" width="12" height="10" viewBox="0 0 12 10"><g fill="#1a5fb4"><rect x="0" y="0" width="3" height="3"/><rect x="4" y="0" width="3" height="3"/><rect x="8" y="0" width="3" height="3"/></g><g fill="#cfe0f4"><rect x="1" y="1" width="1" height="1"/><rect x="5" y="1" width="1" height="1"/><rect x="9" y="1" width="1" height="1"/></g><path d="M0.3 4.3L5.5 9.2L10.7 4.3" fill="none" stroke="#1a5fb4" stroke-width="1.3"/></svg>
<div class="a" style="left:753px;top:755px;width:121px;height:23px;background:#fff;border:1px solid #adadad"></div>
<svg class="a" style="left:857px;top:762px" width="12" height="10" viewBox="0 0 12 10"><g fill="#1a5fb4"><rect x="0" y="0" width="3" height="3"/><rect x="4" y="0" width="3" height="3"/><rect x="8" y="0" width="3" height="3"/></g><g fill="#cfe0f4"><rect x="1" y="1" width="1" height="1"/><rect x="5" y="1" width="1" height="1"/><rect x="9" y="1" width="1" height="1"/></g><path d="M0.3 4.3L5.5 9.2L10.7 4.3" fill="none" stroke="#1a5fb4" stroke-width="1.3"/></svg>
<div class="a" style="left:78px;top:791px;width:264px;height:23px;background:#e1e1e1;border:1px solid #adadad;text-align:center;line-height:21px;padding-top:1px;white-space:nowrap;">Účetní informace, párovací symbol</div>
<div class="a" style="left:348px;top:791px;width:264px;height:23px;background:#e1e1e1;border:1px solid #adadad;text-align:center;line-height:21px;padding-top:1px;white-space:nowrap;">Přehled čerpání zálohy</div>
<div class="a" style="left:618px;top:791px;width:263px;height:23px;background:#e1e1e1;border:1px solid #adadad;text-align:center;line-height:21px;padding-top:1px;white-space:nowrap;">Položky dokladů DPH</div>
<div class="a" style="left:78px;top:845px;width:803px;height:2px;background:#00acec"></div>
<div class="a" style="left:78px;top:820px;width:106px;height:25px;background:#00acec"></div>
<div class="a" style="left:185px;top:820px;width:116px;height:25px;background:#0052a4"></div>
<div class="a" style="left:302px;top:820px;width:110px;height:25px;background:#0052a4"></div>
<svg class="a" style="left:82px;top:824px" width="17" height="17" viewBox="0 0 17 17"><path d="M0.7 0.7H15.3V11.3H5L2 14.5V11.3H0.7Z" fill="none" stroke="#fff" stroke-width="1.2"/><path d="M3.5 4H12.5M3.5 7H10" stroke="#fff" stroke-width="1.2"/></svg>
<div class="t" style="left:106px;top:826px;color:#fff;font-size:11.5px">Komentáře (0)</div>
<svg class="a" style="left:190px;top:823px" width="13" height="17" viewBox="0 0 13 17"><path d="M0.7 0.7H8.5L12.3 4.5V16.3H0.7Z" fill="none" stroke="#fff" stroke-width="1.2"/></svg>
<div class="t" style="left:213px;top:826px;color:#fff;font-size:11.5px">Text hlavičky ( )</div>
<svg class="a" style="left:307px;top:823px" width="13" height="17" viewBox="0 0 13 17"><path d="M0.7 0.7H8.5L12.3 4.5V16.3H0.7Z M3 13.5H10" fill="none" stroke="#fff" stroke-width="1.2"/></svg>
<div class="t" style="left:330px;top:826px;color:#fff;font-size:11.5px">Text patičky ( )</div>
<div class="a" style="left:78px;top:847px;width:1px;height:72px;background:#c9c9c9"></div>
<div class="a" style="left:79px;top:847px;width:802px;height:72px;background:#f0f0f0"></div>
<div class="a" style="left:85px;top:853px;width:789px;height:25px;background:#00acec"></div>
<svg class="a" style="left:90px;top:859px" width="17" height="17" viewBox="0 0 17 17"><path d="M1 2.5C3 1.3 6 1.3 8 2.5V13.5C6 12.3 3 12.3 1 13.5Z M8 2.5C10 1.3 13 1.3 15 2.5V13.5C13 12.3 10 12.3 8 13.5Z" fill="none" stroke="#fff" stroke-width="1.3"/><path d="M12 14.5h4l-2 2.5z" fill="#fff"/></svg>
<div class="t" style="left:112px;top:858px;color:#fff;font-weight:bold;font-size:13px;line-height:15px">Komentáře</div>
<div class="a" style="left:618px;top:855px;width:1px;height:21px;background:#0a93c8"></div>
<div class="a" style="left:733px;top:855px;width:1px;height:21px;background:#0a93c8"></div>
<div class="a" style="left:849px;top:855px;width:1px;height:21px;background:#0a93c8"></div>
<svg class="a" style="left:713px;top:855px" width="160" height="22" viewBox="720 499 160 22"><g fill="none" stroke="#fff" stroke-width="1.4"><path d="M747 506.5V501.7H758V506.5M743.7 507.2H761.3V516H743.7ZM747.5 513H757.5V517.5H747.5Z"/><path d="M768.7 506.7H771.8V516.5H768.7ZM774 510.7H777V516.5H774ZM779.4 502.7H782.6V516.5H779.4Z"/><path d="M795 504L798.5 502.3L802 504V508L798.5 509.7L795 508ZM795 504L798.5 505.7L802 504M798.5 505.7V509.7"/><path d="M791.3 511L794.8 509.3L798.3 511V515L794.8 516.7L791.3 515ZM791.3 511L794.8 512.7L798.3 511M794.8 512.7V516.7"/><path d="M798.7 511L802.2 509.3L805.7 511V515L802.2 516.7L798.7 515ZM798.7 511L802.2 512.7L805.7 511M802.2 512.7V516.7"/><path d="M813.7 501.7H817V517H813.7ZM826.2 501.7H829.5V517H826.2Z"/><circle cx="844.5" cy="509.3" r="5.2" stroke-width="1.6"/><circle cx="844.5" cy="509.3" r="1.9" stroke-width="1.4"/><path d="M844.5 502V503.5M844.5 515V516.5M837.2 509.3H838.7M850.3 509.3H851.8M839.3 504.1L840.4 505.2M848.6 513.4L849.7 514.5M849.7 504.1L848.6 505.2M840.4 513.4L839.3 514.5" stroke-width="1.3"/><path d="M859 504.5H878M859 509.7H878M859 514.9H878" stroke-width="1.5"/></g><g fill="#fff"><rect x="819.3" y="501.2" width="4.6" height="16.3"/><path d="M758 517h4.5l-2.25 2.5z"/><path d="M778.7 516.5h5.5l-2.75 3z"/><path d="M803.5 517h5l-2.5 3z"/><path d="M825.8 517h5l-2.5 3z"/><path d="M849 517h5.5l-2.75 3z"/></g></svg>
<svg class="a" style="left:620px;top:855px" width="112" height="22" viewBox="0 0 112 22"><g fill="none" stroke-width="1.4"><path d="M4.7 4H11.5L15.3 7.8V18H4.7ZM11.5 4V7.8H15.3" stroke="#fff"/><path d="M27 7H34V19H27ZM30 4H38V16H34" stroke="#45bdee"/><path d="M51.5 6L61 11L51.5 16Z" stroke="#45bdee"/><path d="M73 17.5L74 14L82.5 5.5A1.5 1.5 0 0 1 85 8L76.5 16.5Z" stroke="#45bdee"/><path d="M96 6H107M99.5 4H103.5M97.5 6V18H105.5V6M100 9V15M103 9V15" stroke="#45bdee"/></g></svg>
<div class="a" style="left:85px;top:878px;width:781px;height:21px;background:#f0f0f0;border-left:1px solid #d0d0d0;border-bottom:1px solid #d6d6d6"></div>
<div class="a" style="left:112px;top:878px;width:1px;height:20px;background:#d2d2d2"></div>
<div class="a" style="left:258px;top:878px;width:1px;height:20px;background:#d2d2d2"></div>
<div class="a" style="left:539px;top:878px;width:1px;height:20px;background:#d2d2d2"></div>
<div class="a" style="left:821px;top:878px;width:1px;height:20px;background:#d2d2d2"></div>
<div class="a" style="left:866px;top:878px;width:1px;height:20px;background:#d2d2d2"></div>
<div class="t" style="left:119px;top:882px;color:#2250ae">Typ</div>
<div class="t" style="left:263px;top:882px;color:#2250ae">Název</div>
<div class="t" style="left:544px;top:882px;color:#2250ae">Komentář 100</div>
<div class="t" style="left:826px;top:882px;color:#2250ae">Pořadí</div>
<div class="a" style="left:85px;top:899px;width:781px;height:20px;background:#fcfcfc;border-left:1px solid #d0d0d0"></div>
<div class="a" style="left:71px;top:925px;width:834px;height:1px;background:#c9c9c9"></div>
<div class="a" style="left:866px;top:898px;width:8px;height:21px;background:#fcfcfc;border-right:1px solid #c9c9c9"></div>
<div class="a" style="left:866px;top:878px;width:8px;height:20px;background:#fcfcfc;border-left:1px solid #d2d2d2;border-right:1px solid #c9c9c9"></div>
<div class="a" style="left:880px;top:847px;width:1px;height:72px;background:#c9c9c9"></div>
<div class="a" style="left:918px;top:34px;width:223px;height:892px;background:#0052a4"></div>
<div class="a" style="left:908px;top:34px;width:7px;height:892px;background:#00acec"></div>
<div class="a" style="left:909.5px;top:468px;width:4px;height:4px;background:#5cc8f2;border-radius:50%"></div>
<div class="a" style="left:909.5px;top:477px;width:4px;height:4px;background:#5cc8f2;border-radius:50%"></div>
<div class="a" style="left:909.5px;top:486px;width:4px;height:4px;background:#5cc8f2;border-radius:50%"></div>
<div class="t" style="left:924px;top:46px;color:#fff;font-size:19px;line-height:22px">Přijatá záloha IN/20...</div>
<svg class="a" style="left:1119px;top:47px" width="14" height="14" viewBox="0 0 14 14"><path d="M8 0.7H13.3V6M13.3 0.7L6.5 7.5M11 8.5V13.3H0.7V3H5.5" fill="none" stroke="#fff" stroke-width="1.3"/></svg>
<div class="a" style="left:921px;top:79px;width:217px;height:25px;background:#00acec"></div>
<div class="t" style="left:925px;top:84px;color:#fff;font-weight:bold;font-size:13px;line-height:15px">Základní údaje</div>
<div class="a" style="left:1113px;top:81px;width:1px;height:21px;background:#0a93c8"></div>
<svg class="a" style="left:1118px;top:88px" width="15" height="8" viewBox="0 0 15 8"><path d="M0.7 7.5L7.5 0.9L14.3 7.5" fill="none" stroke="#fff" stroke-width="1.3"/></svg>
<div class="a" style="left:921px;top:104px;width:217px;height:299px;background:#fcfcfc"></div>
<div class="t" style="left:928px;top:111px;color:#2250ae">Zakázka:</div>
<div class="t" style="left:1000px;top:111px;width:131px;text-align:right">10/2024/2</div>
<div class="a" style="left:928px;top:125px;width:203px;height:1px;background:#e4e4e4"></div>
<div class="t" style="left:928px;top:133px;color:#2250ae">Odběratel:</div>
<div class="a" style="left:928px;top:147px;width:203px;height:1px;background:#e4e4e4"></div>
<div class="t" style="left:928px;top:155px;color:#2250ae">Popis:</div>
<div class="a" style="left:928px;top:169px;width:203px;height:1px;background:#e4e4e4"></div>
<div class="t" style="left:928px;top:177px;color:#2250ae">Netto:</div>
<div class="t" style="left:1000px;top:177px;width:131px;text-align:right">-2 671,90 <span style="color:#2250ae">Kč</span></div>
<div class="a" style="left:928px;top:191px;width:203px;height:1px;background:#e4e4e4"></div>
<div class="t" style="left:928px;top:199px;color:#2250ae">DPH:</div>
<div class="t" style="left:1000px;top:199px;width:131px;text-align:right">-561,10 <span style="color:#2250ae">Kč</span></div>
<div class="a" style="left:928px;top:213px;width:203px;height:1px;background:#e4e4e4"></div>
<div class="t" style="left:928px;top:221px;color:#2250ae"><b>Brutto:</b></div>
<div class="t" style="left:1000px;top:221px;width:131px;text-align:right"><b>-3 233,00 <span style="color:#1c4fa0">Kč</span></b></div>
<div class="a" style="left:928px;top:235px;width:203px;height:1px;background:#e4e4e4"></div>
<div class="t" style="left:928px;top:243px;color:#2250ae">Datum účetního případu:</div>
<div class="t" style="left:1000px;top:243px;width:131px;text-align:right">21.02.2024</div>
<div class="a" style="left:928px;top:257px;width:203px;height:1px;background:#e4e4e4"></div>
<div class="t" style="left:928px;top:265px;color:#2250ae">Datum UZP:</div>
<div class="t" style="left:1000px;top:265px;width:131px;text-align:right">21.02.2024</div>
<div class="a" style="left:928px;top:279px;width:203px;height:1px;background:#e4e4e4"></div>
<div class="t" style="left:928px;top:287px;color:#2250ae">Datum splatnosti:</div>
<div class="t" style="left:1000px;top:287px;width:131px;text-align:right">06.03.2024</div>
<div class="a" style="left:928px;top:301px;width:203px;height:1px;background:#e4e4e4"></div>
<div class="t" style="left:928px;top:309px;color:#2250ae">Datum zaplacení:</div>
<div class="t" style="left:1000px;top:309px;width:131px;text-align:right">21.02.2024</div>
<div class="a" style="left:928px;top:323px;width:203px;height:1px;background:#e4e4e4"></div>
<div class="t" style="left:928px;top:331px;color:#2250ae">Zbývá zaplatit:</div>
<div class="t" style="left:1000px;top:331px;width:131px;text-align:right">0,00 <span style="color:#2250ae">Kč</span></div>
<div class="a" style="left:928px;top:345px;width:203px;height:1px;background:#e4e4e4"></div>
<div class="t" style="left:928px;top:353px;color:#2250ae">Zbývá dočerpat:</div>
<div class="t" style="left:1000px;top:353px;width:131px;text-align:right"><b>0,00 <span style="color:#1c4fa0">Kč</span></b></div>
<div class="t" style="left:987px;top:133px;letter-spacing:-0.35px">OMEGA s.r.o.; Plzeňská; O...</div>
<div class="a" style="left:922px;top:345px;width:215px;height:28px;border:5px solid #ec1c24"></div>
<div class="a" style="left:928px;top:374px;width:100px;height:23px;overflow:hidden"><div class="t" style="left:0;top:2px;font-weight:bold;line-height:14px">Daňový<br>doklad</div></div>
<svg class="a" style="left:1031px;top:374px" width="22" height="24" viewBox="0 0 16 17"><g fill="none" stroke="#17a0e6" stroke-width="1.25"><rect x="0.6" y="1.6" width="10.8" height="13.1"/><path d="M3.5 3.6H8.5V1.7L6 0.5L3.5 1.7Z" fill="#fcfcfc"/><rect x="8.3" y="6.9" width="6.1" height="8.6" fill="#fcfcfc"/><circle cx="3.6" cy="10.6" r="1.5"/></g><path d="M10 9.3H12.7M2.4 7.2V5.2M4.1 7.2V6M5.6 7.2V5.5" stroke="#17a0e6" stroke-width="1.2"/><g fill="#17a0e6"><rect x="9.8" y="11" width="1.1" height="1.1"/><rect x="11.9" y="11" width="1.1" height="1.1"/><rect x="9.8" y="13" width="1.1" height="1.1"/><rect x="11.9" y="13" width="1.1" height="1.1"/></g></svg>
<div class="a" style="left:1056px;top:374px;width:23px;height:23px;background:#3ec47a;border:1px solid #5e8c6c"></div>
<svg class="a" style="left:1086px;top:377px" width="15" height="17" viewBox="0 0 15 17"><path d="M3.5 8V5a4 4 0 0 1 8 0v3" fill="none" stroke="#3dba6f" stroke-width="2"/><rect x="0.5" y="8" width="14" height="9" fill="#3dba6f"/></svg>
<div class="a" style="left:921px;top:410px;width:217px;height:25px;background:#00acec"></div>
<div class="t" style="left:925px;top:415px;color:#fff;font-weight:bold;font-size:13px;line-height:15px">Ostatní údaje</div>
<div class="a" style="left:1113px;top:412px;width:1px;height:21px;background:#0a93c8"></div>
<svg class="a" style="left:1118px;top:419px" width="15" height="8" viewBox="0 0 15 8"><path d="M0.7 7.5L7.5 0.9L14.3 7.5" fill="none" stroke="#fff" stroke-width="1.3"/></svg>
<div class="a" style="left:921px;top:435px;width:217px;height:50px;background:#fcfcfc"></div>
<div class="t" style="left:928px;top:442px;color:#2250ae">Vytvořil:</div>
<div class="t" style="left:990px;top:442px;width:141px;text-align:right;letter-spacing:-0.6px">K2 <span style="color:#2250ae">21.02.2024 14:46:44</span></div>
<div class="a" style="left:928px;top:456px;width:203px;height:1px;background:#e4e4e4"></div>
<div class="t" style="left:928px;top:464px;color:#2250ae">Změnil:</div>
<div class="t" style="left:990px;top:464px;width:141px;text-align:right;letter-spacing:-0.6px">K2 <span style="color:#2250ae">21.02.2024 14:52:53</span></div>
<div class="a" style="left:928px;top:478px;width:203px;height:1px;background:#e4e4e4"></div>
<div class="a" style="left:921px;top:847px;width:217px;height:25px;background:#00acec"></div>
<div class="t" style="left:925px;top:852px;color:#fff;font-weight:bold;font-size:13px;line-height:15px">Nastavení</div>
<div class="a" style="left:1113px;top:849px;width:1px;height:21px;background:#0a93c8"></div>
<svg class="a" style="left:1118px;top:856px" width="15" height="8" viewBox="0 0 15 8"><path d="M0.7 7.5L7.5 0.9L14.3 7.5" fill="none" stroke="#fff" stroke-width="1.3"/></svg>
<div class="a" style="left:921px;top:872px;width:217px;height:50px;background:#fcfcfc"></div>
<div class="t" style="left:935px;top:879px;color:#2250ae;">Období</div>
<div class="t" style="left:1040px;top:879px;color:#2250ae;">Sklad</div>
<div class="a" style="left:928px;top:893px;width:99px;height:23px;background:#fffff0;border:1px solid #2aa6e0"></div>
<div class="t" style="left:931px;top:899px;color:#000;font-size:13px">2024</div>
<svg class="a" style="left:1010px;top:900px" width="12" height="10" viewBox="0 0 12 10"><g fill="#1a5fb4"><rect x="0" y="0" width="3" height="3"/><rect x="4" y="0" width="3" height="3"/><rect x="8" y="0" width="3" height="3"/></g><g fill="#cfe0f4"><rect x="1" y="1" width="1" height="1"/><rect x="5" y="1" width="1" height="1"/><rect x="9" y="1" width="1" height="1"/></g><path d="M0.3 4.3L5.5 9.2L10.7 4.3" fill="none" stroke="#1a5fb4" stroke-width="1.3"/></svg>
<div class="a" style="left:1033px;top:893px;width:98px;height:23px;background:#fffff0;border:1px solid #2aa6e0"></div>
<svg class="a" style="left:1114px;top:900px" width="12" height="10" viewBox="0 0 12 10"><g fill="#1a5fb4"><rect x="0" y="0" width="3" height="3"/><rect x="4" y="0" width="3" height="3"/><rect x="8" y="0" width="3" height="3"/></g><g fill="#cfe0f4"><rect x="1" y="1" width="1" height="1"/><rect x="5" y="1" width="1" height="1"/><rect x="9" y="1" width="1" height="1"/></g><path d="M0.3 4.3L5.5 9.2L10.7 4.3" fill="none" stroke="#1a5fb4" stroke-width="1.3"/></svg>
<div class="a" style="left:0;top:0;width:1145px;height:930px;border:1px solid #6f6f6f;"></div>
</body></html>
